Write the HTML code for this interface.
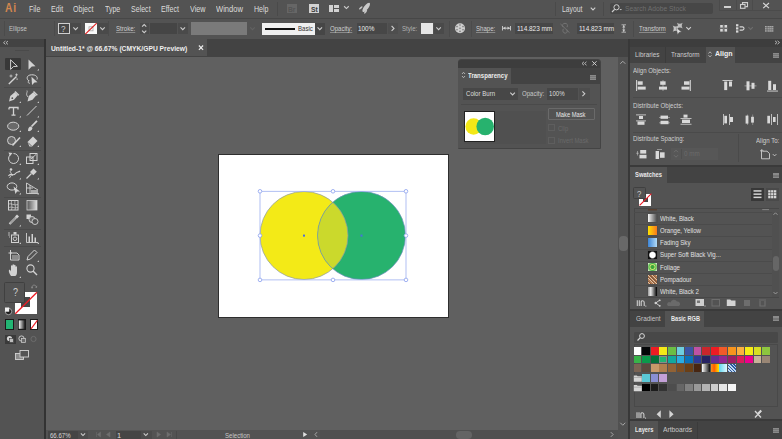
<!DOCTYPE html>
<html><head><meta charset="utf-8">
<style>
*{box-sizing:border-box;margin:0;padding:0}
html,body{width:782px;height:439px;overflow:hidden;background:#535353;font-family:"Liberation Sans",sans-serif;color:#d6d6d6}
.a{position:absolute}
.t{position:absolute;white-space:nowrap;transform-origin:0 0;line-height:1}
</style></head><body>
<div class="a" style="left:0px;top:0px;width:782px;height:18px;background:#535353;"></div>
<div class="a" style="left:0px;top:17.5px;width:782px;height:1px;background:#474747;"></div>
<div class="t" style="left:5px;top:1.4px;font-size:13.2px;color:#d4874f;font-weight:700;transform:scaleX(0.78);letter-spacing:.9px">Ai</div>
<div class="t" style="left:28.8px;top:4.6px;font-size:8.3px;color:#dcdcdc;font-weight:400;transform:scaleX(0.85);">File</div>
<div class="t" style="left:50.8px;top:4.6px;font-size:8.3px;color:#dcdcdc;font-weight:400;transform:scaleX(0.85);">Edit</div>
<div class="t" style="left:72.9px;top:4.6px;font-size:8.3px;color:#dcdcdc;font-weight:400;transform:scaleX(0.85);">Object</div>
<div class="t" style="left:105px;top:4.6px;font-size:8.3px;color:#dcdcdc;font-weight:400;transform:scaleX(0.85);">Type</div>
<div class="t" style="left:131px;top:4.6px;font-size:8.3px;color:#dcdcdc;font-weight:400;transform:scaleX(0.85);">Select</div>
<div class="t" style="left:161px;top:4.6px;font-size:8.3px;color:#dcdcdc;font-weight:400;transform:scaleX(0.85);">Effect</div>
<div class="t" style="left:189.8px;top:4.6px;font-size:8.3px;color:#dcdcdc;font-weight:400;transform:scaleX(0.87);">View</div>
<div class="t" style="left:215.8px;top:4.6px;font-size:8.3px;color:#dcdcdc;font-weight:400;transform:scaleX(0.91);">Window</div>
<div class="t" style="left:253.8px;top:4.6px;font-size:8.3px;color:#dcdcdc;font-weight:400;transform:scaleX(0.85);">Help</div>
<div class="a" style="left:276.5px;top:2px;width:1px;height:14px;background:#4a4a4a;"></div>
<div class="a" style="left:286.6px;top:3.8px;width:10.3px;height:9.6px;background:#666666;"></div>
<div class="t" style="left:288.3px;top:5.5px;font-size:7.5px;color:#545454;font-weight:700;transform:scaleX(0.9);">Br</div>
<div class="a" style="left:309px;top:3.8px;width:9.8px;height:9.6px;background:#d2d2d2;"></div>
<div class="t" style="left:310.5px;top:5.5px;font-size:7.5px;color:#3a3a3a;font-weight:700;transform:scaleX(0.9);">St</div>
<div class="a" style="left:328.5px;top:4.8px;width:4.6px;height:7px;background:#d2d2d2;"></div>
<div class="a" style="left:333.8px;top:4.8px;width:5.2px;height:3px;background:#d2d2d2;"></div>
<div class="a" style="left:333.8px;top:8.7px;width:5.2px;height:3.1px;background:#d2d2d2;"></div>
<div class="a" style="left:554.5px;top:2px;width:1px;height:14px;background:#4a4a4a;"></div>
<div class="t" style="left:562.4px;top:4.8px;font-size:8.3px;color:#d8d8d8;font-weight:400;transform:scaleX(0.82);">Layout</div>
<div class="a" style="left:603px;top:2px;width:1px;height:14px;background:#4a4a4a;"></div>
<div class="a" style="left:610px;top:3px;width:102.6px;height:11px;background:#474747;border-radius:2px"></div>
<div class="t" style="left:624.6px;top:4.8px;font-size:8px;color:#6f6f6f;font-weight:400;transform:scaleX(0.84);">Search Adobe Stock</div>
<div class="a" style="left:718.7px;top:0px;width:1px;height:10.5px;background:#4b4b4b;"></div>
<div class="a" style="left:718.7px;top:10px;width:63.3px;height:1px;background:#4b4b4b;"></div>
<div class="a" style="left:735.5px;top:0px;width:1px;height:10.5px;background:#4b4b4b;"></div>
<div class="a" style="left:752.4px;top:0px;width:1px;height:10.5px;background:#4b4b4b;"></div>
<div class="a" style="left:723.5px;top:6px;width:7px;height:1.8px;background:#d0d0d0;"></div>
<div class="a" style="left:0px;top:18.5px;width:782px;height:20px;background:#535353;"></div>
<div class="a" style="left:4px;top:21px;width:1px;height:15px;background:#4b4b4b;"></div>
<div class="t" style="left:9px;top:25px;font-size:7.6px;color:#c4c4c4;font-weight:400;transform:scaleX(0.8);">Ellipse</div>
<div class="a" style="left:53.5px;top:21px;width:1px;height:15px;background:#4b4b4b;"></div>
<div class="a" style="left:57.9px;top:22.8px;width:12.2px;height:11.7px;background:#474747;border:1.4px solid #cfcfcf"></div>
<div class="t" style="left:61.2px;top:24.8px;font-size:9px;color:#cfcfcf;font-weight:400;transform:scaleX(0.9);">?</div>
<div class="a" style="left:70.1px;top:22.8px;width:11px;height:11.7px;background:#4a4a4a;"></div>
<div class="a" style="left:84.9px;top:22.8px;width:12.1px;height:11.7px;background:#fafafa;"></div>
<div class="a" style="left:97px;top:22.8px;width:11px;height:11.7px;background:#4a4a4a;"></div>
<div class="a" style="left:107.5px;top:21px;width:1px;height:15px;background:#4b4b4b;"></div>
<div class="t" style="left:115.6px;top:25.2px;font-size:7.6px;color:#d0d0d0;font-weight:400;transform:scaleX(0.8);text-decoration:underline;text-decoration-color:#8a8a8a">Stroke:</div>
<div class="a" style="left:139.5px;top:22.8px;width:9.5px;height:11.5px;background:#4a4a4a;"></div>
<div class="a" style="left:149.9px;top:22.8px;width:27.4px;height:11.5px;background:#454545;"></div>
<div class="a" style="left:177.5px;top:22.8px;width:10.4px;height:11.5px;background:#4a4a4a;"></div>
<div class="a" style="left:191.3px;top:22.3px;width:55.4px;height:12.7px;background:#7a7a7a;"></div>
<div class="a" style="left:261.7px;top:22.8px;width:52.9px;height:11.9px;background:#f0f0f0;"></div>
<div class="a" style="left:264.8px;top:27.6px;width:30.2px;height:2px;background:#111111;"></div>
<div class="t" style="left:298px;top:25.2px;font-size:7.6px;color:#303030;font-weight:400;transform:scaleX(0.8);">Basic</div>
<div class="a" style="left:314.6px;top:22.8px;width:10.4px;height:11.9px;background:#464646;"></div>
<div class="t" style="left:330px;top:25.2px;font-size:7.6px;color:#d0d0d0;font-weight:400;transform:scaleX(0.8);text-decoration:underline;text-decoration-color:#8a8a8a">Opacity:</div>
<div class="a" style="left:356.6px;top:22.6px;width:30.4px;height:11.5px;background:#474747;"></div>
<div class="t" style="left:358.3px;top:25px;font-size:7.6px;color:#ececec;font-weight:400;transform:scaleX(0.84);">100%</div>
<div class="a" style="left:388px;top:22.6px;width:10px;height:11.5px;background:#4e4e4e;"></div>
<div class="t" style="left:401.5px;top:25.2px;font-size:7.6px;color:#b0b0b0;font-weight:400;transform:scaleX(0.8);">Style:</div>
<div class="a" style="left:420.5px;top:22.8px;width:12.1px;height:11.7px;background:#e6e6e6;"></div>
<div class="a" style="left:433.5px;top:22.8px;width:10.5px;height:11.7px;background:#4a4a4a;"></div>
<div class="a" style="left:448.7px;top:20.5px;width:1px;height:16px;background:#4b4b4b;"></div>
<div class="a" style="left:471.2px;top:20.5px;width:1px;height:16px;background:#4b4b4b;"></div>
<div class="t" style="left:475.8px;top:25.2px;font-size:7.6px;color:#d0d0d0;font-weight:400;transform:scaleX(0.8);text-decoration:underline;text-decoration-color:#8a8a8a">Shape:</div>
<div class="a" style="left:515.2px;top:22.5px;width:38px;height:11.8px;background:#474747;"></div>
<div class="t" style="left:517px;top:25.2px;font-size:7.6px;color:#ececec;font-weight:400;transform:scaleX(0.845);">114.823 mm</div>
<div class="a" style="left:577px;top:22.5px;width:37.2px;height:11.8px;background:#474747;"></div>
<div class="t" style="left:578.6px;top:25.2px;font-size:7.6px;color:#ececec;font-weight:400;transform:scaleX(0.845);">114.823 mm</div>
<div class="a" style="left:633px;top:20.5px;width:1px;height:16px;background:#4b4b4b;"></div>
<div class="t" style="left:638.5px;top:25.2px;font-size:7.6px;color:#d0d0d0;font-weight:400;transform:scaleX(0.78);text-decoration:underline;text-decoration-color:#8a8a8a">Transform</div>
<svg class="a" style="left:0;top:0" width="782" height="439" viewBox="0 0 782 439"><path d="M344.09999999999997 6.25 L346.4 8.55 L348.7 6.25" fill="none" stroke="#cdcdcd" stroke-width="1.1"/>
<ellipse cx="366.2" cy="7.4" rx="5.6" ry="2.1" transform="rotate(-52 366.2 7.4)" fill="#cacaca"/><ellipse cx="360.8" cy="7.9" rx="2.2" ry="0.9" transform="rotate(-40 360.8 7.9)" fill="#c4c4c4"/><ellipse cx="365.6" cy="11.8" rx="2.3" ry="0.9" transform="rotate(-55 365.6 11.8)" fill="#c4c4c4"/>
<path d="M590.75 7.675000000000001 L593 9.925 L595.25 7.675000000000001" fill="none" stroke="#cdcdcd" stroke-width="1.1"/>
<circle cx="616.5" cy="7.3" r="2.6" fill="none" stroke="#cfcfcf" stroke-width="1"/><path d="M614.6 9.3 L612 12" stroke="#cfcfcf" stroke-width="1.2"/><path d="M619.5 9 L622 9 L620.75 10.3Z" fill="#cfcfcf"/>
<rect x="740.5" y="4.5" width="4.5" height="3.8" fill="none" stroke="#d0d0d0" stroke-width="1.1"/><path d="M742.5 4.2 V2.6 H747.5 V6.6 H745.3" fill="none" stroke="#d0d0d0" stroke-width="1.1"/>
<path d="M763.2 3 L769 8.2 M769 3 L763.2 8.2" stroke="#d8d8d8" stroke-width="1.1"/>
<path d="M73.35 27.475 L75.6 29.725 L77.85 27.475" fill="none" stroke="#cdcdcd" stroke-width="1.1"/>
<rect x="89" y="26.8" width="4" height="4" fill="none" stroke="#a8a8a8" stroke-width=".8"/><path d="M85.3 34.2 L96.7 23.1" stroke="#e01a1a" stroke-width="1.1"/>
<path d="M100.25 27.475 L102.5 29.725 L104.75 27.475" fill="none" stroke="#cdcdcd" stroke-width="1.1"/>
<path d="M142.1 26.650000000000002 L144.2 24.55 L146.29999999999998 26.650000000000002" fill="none" stroke="#cdcdcd" stroke-width="1.1"/>
<path d="M142.1 30.55 L144.2 32.65 L146.29999999999998 30.55" fill="none" stroke="#cdcdcd" stroke-width="1.1"/>
<path d="M180.55 27.475 L182.8 29.725 L185.05 27.475" fill="none" stroke="#cdcdcd" stroke-width="1.1"/>
<path d="M250.25 27.475 L252.5 29.725 L254.75 27.475" fill="none" stroke="#626262" stroke-width="1.1"/>
<path d="M317.55 27.475 L319.8 29.725 L322.05 27.475" fill="none" stroke="#cdcdcd" stroke-width="1.1"/>
<path d="M391.6 26.0 L394.0 28.4 L391.6 30.799999999999997" fill="none" stroke="#cdcdcd" stroke-width="1.1"/>
<path d="M436.35 27.475 L438.6 29.725 L440.85 27.475" fill="none" stroke="#cdcdcd" stroke-width="1.1"/>
<circle cx="460" cy="28.2" r="5" fill="#cfcfcf"/><g fill="#7a7a7a"><circle cx="460" cy="28.2" r=".8"/><circle cx="460" cy="25" r=".8"/><circle cx="460" cy="31.4" r=".8"/><circle cx="457" cy="26.6" r=".8"/><circle cx="463" cy="26.6" r=".8"/><circle cx="457" cy="29.8" r=".8"/><circle cx="463" cy="29.8" r=".8"/></g>
<path d="M502.5 26 V30.5 M510.5 26 V30.5 M503 28.2 H510" stroke="#cfcfcf" stroke-width=".9"/><path d="M503 28.2 L505.5 26.6 V29.8Z M510 28.2 L507.5 26.6 V29.8Z" fill="#cfcfcf"/>
<path d="M563 27 C561.8 25 563 23.3 565 23.3 C567 23.3 568.2 25 567 27.2 M563.3 28.8 C562.3 30.8 563.2 33.2 565.2 33.2 C567 33.2 567.8 31.5 566.8 29.5 M560.5 24 L569.5 32.7" fill="none" stroke="#747474" stroke-width="1"/>
<path d="M621.5 24.8 H626 M621.5 32.2 H626 M623.75 25 V32" stroke="#c8c8c8" stroke-width=".8"/><path d="M623.75 25.3 L622.2 27.5 H625.3Z M623.75 31.7 L622.2 29.5 H625.3Z" fill="#c8c8c8"/>
<path d="M676.9 22.700000000000003 Q679.8 24.585 682.6999999999999 22.700000000000003 Q680.8149999999999 25.6 682.6999999999999 28.5 Q679.8 26.615000000000002 676.9 28.5 Q678.785 25.6 676.9 22.700000000000003Z" fill="#bdbdbd"/><path d="M672.6999999999999 25.5 Q675.8 27.515 678.9 25.5 Q676.885 28.6 678.9 31.700000000000003 Q675.8 29.685000000000002 672.6999999999999 31.700000000000003 Q674.7149999999999 28.6 672.6999999999999 25.5Z" fill="#c4c4c4"/><path d="M676.2 27.8 L681.6 32 L679.2 32.3 L677.6 34.6Z" fill="#e0e0e0" stroke="#535353" stroke-width=".4"/>
<path d="M686.3000000000001 27.05 L688.6 29.349999999999998 L690.9 27.05" fill="none" stroke="#cdcdcd" stroke-width="1.1"/>
<path d="M723.6 24.5 V32 M719.5 28.2 H728" stroke="#8a8a8a" stroke-width=".6"/><g fill="#d8d8d8"><rect x="720.2" y="25" width="2.6" height="2.6"/><rect x="724.5" y="25" width="2.6" height="2.6"/><rect x="720.2" y="29" width="2.6" height="2.6"/><rect x="724.5" y="29" width="2.6" height="2.6"/></g>
<g fill="#d8d8d8"><rect x="736" y="24.2" width="2.4" height="2.2"/><rect x="736" y="27.3" width="2.4" height="2.2"/><rect x="736" y="30.4" width="2.4" height="2.2"/></g><path d="M739.6 26.9 H742.4 A1.6 1.6 0 0 1 742.4 30.1 H739.6" fill="none" stroke="#d8d8d8" stroke-width="1.1"/>
<path d="M748.4 27.2 L750.6 29.400000000000002 L752.8000000000001 27.2" fill="none" stroke="#6e6e6e" stroke-width="1.1"/>
<g fill="#a8a8a8"><rect x="765" y="26" width="1.7" height="1.5"/><rect x="765" y="28.1" width="1.7" height="1.5"/><rect x="765" y="30.2" width="1.7" height="1.5"/><rect x="767.4" y="26" width="6" height="1.5"/><rect x="767.4" y="28.1" width="6" height="1.5"/><rect x="767.4" y="30.2" width="6" height="1.5"/></g><path d="M769.4 26 V31.7 M771.4 26 V31.7" stroke="#6a6a6a" stroke-width=".4"/></svg>
<div class="a" style="left:0px;top:38.5px;width:44px;height:8.5px;background:#434343;"></div>
<div class="a" style="left:44px;top:38.5px;width:2px;height:401px;background:#333333;"></div>
<div class="a" style="left:14.5px;top:49.8px;width:14px;height:1px;background:#4a4a4a;"></div>
<div class="a" style="left:46px;top:38.5px;width:582px;height:18.5px;background:#434343;"></div>
<div class="a" style="left:45.8px;top:39.4px;width:161.3px;height:17px;background:#535353;"></div>
<div class="t" style="left:51.4px;top:45.6px;font-size:7.1px;color:#f0f0f0;font-weight:700;transform:scaleX(0.945);">Untitled-1* @ 66.67% (CMYK/GPU Preview)</div>
<div class="a" style="left:46px;top:57px;width:572px;height:373px;background:#606060;"></div>
<div class="a" style="left:618px;top:57px;width:10px;height:382px;background:#515151;"></div>
<div class="a" style="left:619px;top:236px;width:8.5px;height:15px;background:#686868;border-radius:4px"></div>
<div class="a" style="left:628px;top:38.5px;width:2px;height:401px;background:#383838;"></div>
<div class="a" style="left:46px;top:430px;width:572px;height:9px;background:#535353;"></div>
<div class="a" style="left:48px;top:430.5px;width:30px;height:8.5px;background:#454545;"></div>
<div class="t" style="left:50px;top:431.5px;font-size:7.4px;color:#d8d8d8;font-weight:400;transform:scaleX(0.82);">66.67%</div>
<div class="a" style="left:78px;top:430.5px;width:10px;height:8.5px;background:#4c4c4c;"></div>
<div class="a" style="left:115.5px;top:430.5px;width:25px;height:8.5px;background:#454545;"></div>
<div class="t" style="left:117px;top:431.5px;font-size:7.4px;color:#d8d8d8;font-weight:400;">1</div>
<div class="a" style="left:140.5px;top:430.5px;width:11px;height:8.5px;background:#4c4c4c;"></div>
<div class="a" style="left:176px;top:430.5px;width:1px;height:8.5px;background:#4a4a4a;"></div>
<div class="t" style="left:225px;top:431.8px;font-size:7.4px;color:#c8c8c8;font-weight:400;transform:scaleX(0.82);">Selection</div>
<div class="a" style="left:320px;top:430px;width:298px;height:9px;background:#505050;"></div>
<div class="a" style="left:456px;top:430.5px;width:16px;height:8px;background:#646464;border-radius:4px"></div>
<div class="a" style="left:218px;top:154px;width:230.5px;height:163.5px;background:#ffffff;border:1px solid #2e2e2e"></div>
<div class="a" style="left:4.6px;top:57.5px;width:16.8px;height:12.7px;background:#383838;border-radius:1px"></div>
<div class="a" style="left:4px;top:87px;width:37px;height:0.8px;background:#4a4a4a;"></div>
<div class="a" style="left:4px;top:149.5px;width:37px;height:0.8px;background:#4a4a4a;"></div>
<div class="a" style="left:4px;top:196.5px;width:37px;height:0.8px;background:#4a4a4a;"></div>
<div class="a" style="left:4px;top:228.5px;width:37px;height:0.8px;background:#4a4a4a;"></div>
<div class="a" style="left:4px;top:245.8px;width:37px;height:0.8px;background:#4a4a4a;"></div>
<div class="a" style="left:15px;top:292px;width:22.2px;height:22px;background:#ffffff;"></div>
<div class="a" style="left:21px;top:297px;width:9.2px;height:10.3px;background:#474747;"></div>
<div class="a" style="left:4.2px;top:281.5px;width:21.3px;height:21.5px;background:#535353;border:1.1px solid #404040;border-radius:1.5px"></div>
<div class="t" style="left:12.6px;top:288px;font-size:10px;color:#d0d0d0;font-weight:400;transform:scaleX(0.9);">?</div>
<div class="a" style="left:5px;top:319.4px;width:8.8px;height:10.4px;background:#1a1a1a;"></div>
<div class="a" style="left:6px;top:320.4px;width:6.8px;height:8.4px;background:#22b573;"></div>
<div class="a" style="left:17.8px;top:319.4px;width:8px;height:10.4px;background:#1a1a1a;"></div>
<div class="a" style="left:30px;top:319.4px;width:8.4px;height:10.4px;background:#1a1a1a;"></div>
<div class="a" style="left:31px;top:320.4px;width:6.4px;height:8.4px;background:#ffffff;"></div>
<div class="a" style="left:5px;top:334.5px;width:10.5px;height:9.5px;background:#3a3a3a;"></div>
<svg class="a" style="left:0;top:0" width="782" height="439" viewBox="0 0 782 439"><path d="M5.5 41 L3.5 42.7 L5.5 44.4 M8 41 L6 42.7 L8 44.4" fill="none" stroke="#bdbdbd" stroke-width=".9"/>
<path d="M198.9 45.5 L203.1 49.9 M203.1 45.5 L198.9 49.9" stroke="#ececec" stroke-width="1.15"/>
<path d="M620.3 63.75 L622.8 61.25 L625.3 63.75" fill="none" stroke="#a8a8a8" stroke-width="1"/>
<path d="M620.3 422.75 L622.8 425.25 L625.3 422.75" fill="none" stroke="#a8a8a8" stroke-width="1"/>
<path d="M80.9 433.45 L83 435.55 L85.1 433.45" fill="none" stroke="#cdcdcd" stroke-width="1.1"/>
<path d="M96.5 432 V437 M100.5 432 L97.5 434.5 L100.5 437 Z M110 432 L106.5 434.5 L110 437Z" fill="#6e6e6e" stroke="#6e6e6e" stroke-width=".5"/>
<path d="M143.70000000000002 433.45 L145.8 435.55 L147.9 433.45" fill="none" stroke="#cdcdcd" stroke-width="1.1"/>
<path d="M157 432 L160.5 434.5 L157 437 Z M167 432 L170.5 434.5 L167 437Z M171.5 432 V437" fill="#6e6e6e" stroke="#6e6e6e" stroke-width=".5"/>
<path d="M303.2 432 L307.2 434.5 L303.2 437Z" fill="#e0e0e0"/>
<path d="M317 432.2 L315 434.5 L317 436.8" fill="none" stroke="#a8a8a8" stroke-width="1"/>
<path d="M610.85 432.2 L613.15 434.5 L610.85 436.8" fill="none" stroke="#a8a8a8" stroke-width="1"/>
<defs><clipPath id="cy"><circle cx="304" cy="235.5" r="44"/></clipPath></defs>
<circle cx="304" cy="235.5" r="44" fill="#f3ea17"/>
<circle cx="361.5" cy="235.5" r="44" fill="#27b26e"/>
<circle cx="361.5" cy="235.5" r="44" fill="#cbd92c" clip-path="url(#cy)"/>
<circle cx="304" cy="235.5" r="44" fill="none" stroke="#8c9aa8" stroke-width=".7"/>
<circle cx="361.5" cy="235.5" r="44" fill="none" stroke="#6f8fc0" stroke-width=".7"/>
<rect x="260" y="191.3" width="146" height="88.6" fill="none" stroke="#9db0f0" stroke-width=".8"/>
<g fill="#ffffff" stroke="#8aa0ee" stroke-width=".8">
<circle cx="260" cy="191.3" r="1.8"/><circle cx="333" cy="191.3" r="1.8"/><circle cx="406" cy="191.3" r="1.8"/><circle cx="260" cy="235.6" r="1.8"/><circle cx="406" cy="235.6" r="1.8"/><circle cx="260" cy="279.9" r="1.8"/><circle cx="333" cy="279.9" r="1.8"/><circle cx="406" cy="279.9" r="1.8"/>
</g>
<rect x="303" y="234.6" width="2" height="2" fill="#4a6ee0"/><rect x="360.5" y="234.6" width="2" height="2" fill="#4a6ee0"/>

<path d="M10.6 59.8 L17.4 66.3 L13.6 66.5 L10.6 69.4Z" fill="none" stroke="#d2d2d2" stroke-width="1"/>
<path d="M28.5 59.5 L35.5 66.3 L31.8 66.6 L28.5 69.8Z" fill="#d2d2d2"/>
<path d="M39 70.5 L37.2 70.5 L39 68.7Z" fill="#c8c8c8"/>
<path d="M8.8 84 L16.5 76.5" stroke="#d2d2d2" stroke-width="1.4"/><path d="M11 74.5 L11 77.5 M9.5 76 L12.5 76 M16.5 73.5 V76 M15.2 74.8 H17.8" stroke="#d2d2d2" stroke-width=".8"/><rect x="16.5" y="78.5" width="1.2" height="1.2" fill="#d2d2d2"/>
<path d="M29 81 C26 79 26.5 75 31.5 74.8 C36 74.6 38 77 37 79.5" fill="none" stroke="#d2d2d2" stroke-width="1"/><path d="M29 80.5 C27.5 82 28.5 84 30 83" fill="none" stroke="#d2d2d2" stroke-width=".9"/><path d="M31.5 76.8 L37.5 82.3 L34.5 82.4 L32 85Z" fill="#d2d2d2"/>
<path d="M9 101.5 L10.3 96 L14.8 92.3 L17.8 95.3 L14 99.8 Z" fill="#d2d2d2"/><path d="M15 91.5 L18.8 95.2" stroke="#d2d2d2" stroke-width="1.4"/><circle cx="12.3" cy="98.2" r=".9" fill="#535353"/>
<path d="M21 103 L19.2 103 L21 101.2Z" fill="#c8c8c8"/>
<path d="M27.5 101.5 L28.8 96 L33.3 92.3 L36.3 95.3 L32.5 99.8 Z" fill="#d2d2d2"/><path d="M33.5 91.5 L37.3 95.2" stroke="#d2d2d2" stroke-width="1.4"/><path d="M28 97 C25 94 28 92 27 90.5" fill="none" stroke="#d2d2d2" stroke-width=".8"/>
<path d="M39 103 L37.2 103 L39 101.2Z" fill="#c8c8c8"/>
<path d="M9 107.5 H18 V109.5 M9 107.5 V109.5 M13.5 107.5 V115.2 M11.5 115.2 H15.5" fill="none" stroke="#d2d2d2" stroke-width="1.3"/>
<path d="M21 117.5 L19.2 117.5 L21 115.7Z" fill="#c8c8c8"/>
<path d="M27 115.5 L36.5 106" stroke="#d2d2d2" stroke-width="1"/>
<path d="M39 117.5 L37.2 117.5 L39 115.7Z" fill="#c8c8c8"/>
<ellipse cx="13.2" cy="126.2" rx="5.6" ry="4" fill="#6a6a6a" stroke="#d2d2d2" stroke-width="1"/>
<path d="M21 132 L19.2 132 L21 130.2Z" fill="#c8c8c8"/>
<path d="M28 131 C28 128 29 126.5 31 126.5 L32.5 128 C32 130.5 30 131.5 28 131Z" fill="#d2d2d2"/><path d="M31.5 126.5 L37 120.8" stroke="#d2d2d2" stroke-width="1.8"/>
<path d="M39 132 L37.2 132 L39 130.2Z" fill="#c8c8c8"/>
<circle cx="11.5" cy="140.5" r="4" fill="#6a6a6a" stroke="#d2d2d2" stroke-width="1"/><path d="M12.5 145.5 L20 137.5" stroke="#d2d2d2" stroke-width="1.6"/>
<path d="M21 147 L19.2 147 L21 145.2Z" fill="#c8c8c8"/>
<path d="M27.5 142 L33 136.5 L37.5 141 L32 146.5 H29.5 Z" fill="#d2d2d2"/><path d="M28 142.5 L31.5 146" stroke="#535353" stroke-width=".8"/>
<path d="M39 147 L37.2 147 L39 145.2Z" fill="#c8c8c8"/>
<path d="M10 155 A5 5 0 1 0 13.5 153.5" fill="none" stroke="#d2d2d2" stroke-width="1"/><path d="M8.5 152.5 L12.5 153 L10 156Z" fill="#d2d2d2"/>
<path d="M21 165 L19.2 165 L21 163.2Z" fill="#c8c8c8"/>
<rect x="26.5" y="157" width="6.5" height="6.5" fill="none" stroke="#d2d2d2" stroke-width="1"/><rect x="30" y="153.5" width="7" height="7" fill="none" stroke="#d2d2d2" stroke-width="1"/><path d="M31 159 L36 154.5" stroke="#d2d2d2" stroke-width=".9"/>
<path d="M39 165 L37.2 165 L39 163.2Z" fill="#c8c8c8"/>
<path d="M8.5 176 C11 172 13 177 15.5 173.5 C17 171.5 18.5 172.5 20 171" fill="none" stroke="#d2d2d2" stroke-width="1.2"/><circle cx="11" cy="169.5" r="1.3" fill="#d2d2d2"/><path d="M10 171 L12.5 176 M9.5 178 L12 174" stroke="#d2d2d2" stroke-width=".8"/>
<path d="M21 179.5 L19.2 179.5 L21 177.7Z" fill="#c8c8c8"/>
<path d="M30 172 L33.5 168.5 L36.8 171.8 L33.3 175.3Z" fill="#d2d2d2"/><path d="M26.5 178.5 L31.5 173.5" stroke="#d2d2d2" stroke-width="1.2"/>
<path d="M39 179.5 L37.2 179.5 L39 177.7Z" fill="#c8c8c8"/>
<ellipse cx="12" cy="186.5" rx="4.8" ry="3.6" fill="none" stroke="#d2d2d2" stroke-width="1"/><path d="M13.5 186.5 L20 191.5 L17 191.5 L15.5 194Z" fill="#d2d2d2"/>
<path d="M21 194.5 L19.2 194.5 L21 192.7Z" fill="#c8c8c8"/>
<path d="M26.5 183 V193.5 H38 M26.5 183 L38 190 M26.5 188 H33 M30 185 V193.5" fill="none" stroke="#d2d2d2" stroke-width=".9"/><path d="M31 190 L38 190 L38 193 L31 193Z" fill="#a8a8a8"/>
<path d="M39 194.5 L37.2 194.5 L39 192.7Z" fill="#c8c8c8"/>
<rect x="8.5" y="200.5" width="9.5" height="9.5" fill="none" stroke="#d2d2d2" stroke-width="1"/><path d="M8.5 204 C12 203 14 206 18 204.5 M8.5 207.5 C12 206 14 209 18 207.5 M11.5 200.5 C10.5 204 13 206 11.5 210 M15 200.5 C14 204 16.5 206 15 210" fill="none" stroke="#d2d2d2" stroke-width=".7"/>
<defs><linearGradient id="tg" x1="0" x2="1"><stop offset="0" stop-color="#555"/><stop offset="1" stop-color="#e0e0e0"/></linearGradient></defs><rect x="27" y="200.5" width="10" height="9.5" fill="url(#tg)" stroke="#d2d2d2" stroke-width=".8"/>
<path d="M9.5 224 L16 217.5" stroke="#d2d2d2" stroke-width="2.2"/><path d="M10.3 223.2 L15.5 218" stroke="#535353" stroke-width=".8"/><path d="M15 216.5 L17 214.5 L19 216.5 L17 218.5Z" fill="#d2d2d2"/>
<path d="M21 226.5 L19.2 226.5 L21 224.7Z" fill="#c8c8c8"/>
<rect x="26.5" y="214.5" width="4.5" height="4.5" fill="#d2d2d2"/><circle cx="32" cy="219.5" r="3" fill="#6a6a6a" stroke="#d2d2d2" stroke-width=".9"/><circle cx="35" cy="221.5" r="3" fill="#535353" stroke="#d2d2d2" stroke-width=".9"/>
<rect x="11.5" y="235" width="7" height="7.5" fill="none" stroke="#d2d2d2" stroke-width="1"/><circle cx="15" cy="238.8" r="1.8" fill="none" stroke="#d2d2d2" stroke-width=".9"/><rect x="13.5" y="232" width="3" height="2.5" fill="#d2d2d2"/><path d="M8 233 H10 M8 235 H10 M9 237 H10" stroke="#d2d2d2" stroke-width=".8"/>
<path d="M21 244 L19.2 244 L21 242.2Z" fill="#c8c8c8"/>
<path d="M26.5 233 V242.5 H38" fill="none" stroke="#d2d2d2" stroke-width=".9"/><rect x="28.5" y="236.5" width="1.5" height="6" fill="#d2d2d2"/><rect x="31.5" y="234" width="1.5" height="8.5" fill="#d2d2d2"/><rect x="34.5" y="237.5" width="1.5" height="5" fill="#d2d2d2"/>
<path d="M39 244 L37.2 244 L39 242.2Z" fill="#c8c8c8"/>
<path d="M10.5 250 V260 H19 V255 L17 253 H10.5 M8.5 253 H12" fill="none" stroke="#d2d2d2" stroke-width="1"/><rect x="12" y="255" width="6" height="4" fill="#8a8a8a"/>
<path d="M27 260 L28 256.5 L34.5 250 L37 252.5 L30.5 259 Z" fill="none" stroke="#d2d2d2" stroke-width="1"/>
<path d="M39 262 L37.2 262 L39 260.2Z" fill="#c8c8c8"/>
<path d="M11 276 C9 273 8.5 271 9 270 C9.5 269.5 10.5 270 11 271.5 V266 C11 265 12.5 265 12.5 266 V269.5 V265 C12.5 264 14 264 14 265 V269.5 V265.5 C14 264.5 15.5 264.5 15.5 265.5 V270 V267 C15.5 266 17 266 17 267 V272 C17 274.5 16 276 15 276Z" fill="#d2d2d2"/>
<path d="M21 278 L19.2 278 L21 276.2Z" fill="#c8c8c8"/>
<circle cx="30.5" cy="268.5" r="3.6" fill="none" stroke="#d2d2d2" stroke-width="1.1"/><path d="M33 271 L37 275" stroke="#d2d2d2" stroke-width="1.5"/>
<path d="M15.3 313.7 L37 292.3" stroke="#ee1c24" stroke-width="1.3"/>
<path d="M32 288 C32 285 34 284 36.5 286.5" fill="none" stroke="#8a8a8a" stroke-width=".9"/><path d="M31 286.8 L32 289 L33.2 287Z M37.2 285.5 L37 288 L35 287.2Z" fill="#8a8a8a"/>
<circle cx="8.5" cy="311.5" r="3.2" fill="#1e1e1e" stroke="#d0d0d0" stroke-width=".7"/><rect x="5" y="307.5" width="4.2" height="4.2" fill="#f0f0f0"/>
<defs><linearGradient id="tg2" x1="0" x2="1"><stop offset="0" stop-color="#fafafa"/><stop offset="1" stop-color="#222"/></linearGradient></defs><rect x="18.8" y="320.4" width="6" height="8.4" fill="url(#tg2)"/>
<path d="M31 328.8 L37.4 320.4" stroke="#ee1c24" stroke-width="1.1"/>
<circle cx="9.5" cy="338.5" r="2.6" fill="#d2d2d2"/><rect x="9.5" y="338.5" width="4" height="4" fill="#bdbdbd" stroke="#3a3a3a" stroke-width=".6"/>
<circle cx="21.5" cy="338.5" r="2.6" fill="none" stroke="#d2d2d2" stroke-width=".9"/><rect x="21.5" y="338.5" width="4" height="4" fill="#6a6a6a" stroke="#d2d2d2" stroke-width=".7"/>
<circle cx="33.5" cy="339" r="2.6" fill="none" stroke="#6e6e6e" stroke-width=".9"/>
<rect x="15.5" y="353.5" width="8" height="6" fill="#8a8a8a" stroke="#d2d2d2" stroke-width=".9"/><rect x="20" y="350.5" width="8.5" height="6.5" fill="#535353" stroke="#d2d2d2" stroke-width=".9"/></svg>
<div class="a" style="left:630px;top:38.5px;width:152px;height:401px;background:#535353;"></div>
<div class="a" style="left:630px;top:38.5px;width:152px;height:8px;background:#3d3d3d;"></div>
<div class="a" style="left:630px;top:46.5px;width:152px;height:16px;background:#434343;"></div>
<div class="a" style="left:665px;top:47px;width:0.8px;height:15.5px;background:#3b3b3b;"></div>
<div class="a" style="left:705.5px;top:47px;width:0.8px;height:15.5px;background:#3b3b3b;"></div>
<div class="a" style="left:706px;top:46.5px;width:29px;height:16px;background:#535353;"></div>
<div class="t" style="left:635.3px;top:50.6px;font-size:7.3px;color:#cccccc;font-weight:400;transform:scaleX(0.875);">Libraries</div>
<div class="t" style="left:670.8px;top:50.6px;font-size:7.3px;color:#cccccc;font-weight:400;transform:scaleX(0.865);">Transform</div>
<div class="t" style="left:714.7px;top:50.4px;font-size:7.6px;color:#f0f0f0;font-weight:700;transform:scaleX(0.92);">Align</div>
<div class="a" style="left:772.8px;top:52.6px;width:6.3px;height:5px;background:#8a8a8a;"></div>
<div class="a" style="left:772.8px;top:54.1px;width:6.3px;height:0.6px;background:#767676;"></div>
<div class="a" style="left:772.8px;top:55.7px;width:6.3px;height:0.6px;background:#767676;"></div>
<div class="t" style="left:633px;top:67.4px;font-size:7.2px;color:#d0d0d0;font-weight:400;transform:scaleX(0.85);">Align Objects:</div>
<div class="a" style="left:633px;top:97px;width:149px;height:0.8px;background:#4a4a4a;"></div>
<div class="t" style="left:633px;top:102.2px;font-size:7.2px;color:#d0d0d0;font-weight:400;transform:scaleX(0.85);">Distribute Objects:</div>
<div class="a" style="left:633px;top:131.6px;width:149px;height:0.8px;background:#4a4a4a;"></div>
<div class="t" style="left:633px;top:135.4px;font-size:7.2px;color:#d0d0d0;font-weight:400;transform:scaleX(0.85);">Distribute Spacing:</div>
<div class="a" style="left:738px;top:134px;width:0.8px;height:28px;background:#4a4a4a;"></div>
<div class="t" style="left:756px;top:136.6px;font-size:7.2px;color:#d0d0d0;font-weight:400;transform:scaleX(0.85);">Align To:</div>
<div class="a" style="left:671px;top:147.8px;width:47px;height:11.8px;background:#575757;"></div>
<div class="a" style="left:681px;top:148.5px;width:0.8px;height:10.5px;background:#4f4f4f;"></div>
<div class="t" style="left:684px;top:150px;font-size:7.4px;color:#6c6c6c;font-weight:400;transform:scaleX(0.85);">0 mm</div>
<div class="a" style="left:630px;top:164.9px;width:152px;height:2.2px;background:#3a3a3a;"></div>
<div class="a" style="left:630px;top:167.2px;width:152px;height:16.3px;background:#434343;"></div>
<div class="a" style="left:630px;top:167.2px;width:37px;height:16.3px;background:#535353;"></div>
<div class="t" style="left:635px;top:171.3px;font-size:7.6px;color:#e8e8e8;font-weight:700;transform:scaleX(0.77);">Swatches</div>
<div class="a" style="left:772.8px;top:173px;width:6.3px;height:5px;background:#8a8a8a;"></div>
<div class="a" style="left:772.8px;top:174.5px;width:6.3px;height:0.6px;background:#767676;"></div>
<div class="a" style="left:772.8px;top:176.1px;width:6.3px;height:0.6px;background:#767676;"></div>
<div class="a" style="left:639.2px;top:193.7px;width:12.3px;height:11.9px;background:#ffffff;"></div>
<div class="a" style="left:643.2px;top:197.5px;width:4.6px;height:4.4px;background:#474747;"></div>
<div class="a" style="left:633px;top:187.2px;width:12.7px;height:12.3px;background:#535353;border:1.2px solid #404040;border-radius:1.5px"></div>
<div class="t" style="left:636.6px;top:189.5px;font-size:8.6px;color:#c8c8c8;font-weight:400;transform:scaleX(0.9);">?</div>
<div class="a" style="left:750.8px;top:188px;width:13.4px;height:12.8px;background:#383838;"></div>
<div class="a" style="left:765.6px;top:187.6px;width:13.6px;height:13.4px;background:#4a4a4a;"></div>
<div class="a" style="left:633.6px;top:208px;width:145.4px;height:89px;background:#535353;border-left:.8px solid #474747;border-top:.8px solid #474747"></div>
<div class="a" style="left:634px;top:212px;width:138px;height:0.8px;background:#4b4b4b;"></div>
<div class="a" style="left:634px;top:224.2px;width:138px;height:0.8px;background:#4b4b4b;"></div>
<div class="a" style="left:634px;top:236.4px;width:138px;height:0.8px;background:#4b4b4b;"></div>
<div class="a" style="left:634px;top:248.6px;width:138px;height:0.8px;background:#4b4b4b;"></div>
<div class="a" style="left:634px;top:260.8px;width:138px;height:0.8px;background:#4b4b4b;"></div>
<div class="a" style="left:634px;top:273px;width:138px;height:0.8px;background:#4b4b4b;"></div>
<div class="a" style="left:634px;top:285.2px;width:138px;height:0.8px;background:#4b4b4b;"></div>
<div class="a" style="left:647.8px;top:213.89999999999998px;width:9px;height:8.6px;background:linear-gradient(90deg,#f6f6f6,#4a4a4a);box-shadow:0 0 0 .5px #4a4a4a"></div>
<div class="t" style="left:660px;top:214.79999999999998px;font-size:7px;color:#e0e0e0;font-weight:400;transform:scaleX(0.87);">White, Black</div>
<div class="a" style="left:647.8px;top:226.11999999999998px;width:9px;height:8.6px;background:linear-gradient(90deg,#ffe100,#f7781e);box-shadow:0 0 0 .5px #4a4a4a"></div>
<div class="t" style="left:660px;top:227.01999999999998px;font-size:7px;color:#e0e0e0;font-weight:400;transform:scaleX(0.87);">Orange, Yellow</div>
<div class="a" style="left:647.8px;top:238.33999999999997px;width:9px;height:8.6px;background:linear-gradient(90deg,#3d85d6,#b4dcf7);box-shadow:0 0 0 .5px #4a4a4a"></div>
<div class="t" style="left:660px;top:239.23999999999998px;font-size:7px;color:#e0e0e0;font-weight:400;transform:scaleX(0.87);">Fading Sky</div>
<div class="a" style="left:647.8px;top:250.55999999999997px;width:9px;height:8.6px;background:radial-gradient(circle,#ffffff 0,#ffffff 2.6px,#101010 4px);box-shadow:0 0 0 .5px #4a4a4a"></div>
<div class="t" style="left:660px;top:251.45999999999998px;font-size:7px;color:#e0e0e0;font-weight:400;transform:scaleX(0.87);">Super Soft Black Vig...</div>
<div class="a" style="left:647.8px;top:262.78px;width:9px;height:8.6px;background:radial-gradient(circle,#3aa53a 0,#3aa53a 1.5px,#c8e070 2.5px,#50b848 3.5px,#dff0d0 5.5px);box-shadow:0 0 0 .5px #4a4a4a"></div>
<div class="t" style="left:660px;top:263.68px;font-size:7px;color:#e0e0e0;font-weight:400;transform:scaleX(0.87);">Foliage</div>
<div class="a" style="left:647.8px;top:275.0px;width:9px;height:8.6px;background:repeating-linear-gradient(45deg,#b07a52 0,#b07a52 1px,#e0c4a8 1px,#e0c4a8 1.8px,#8a5a3a 1.8px,#8a5a3a 2.6px);box-shadow:0 0 0 .5px #4a4a4a"></div>
<div class="t" style="left:660px;top:275.90000000000003px;font-size:7px;color:#e0e0e0;font-weight:400;transform:scaleX(0.87);">Pompadour</div>
<div class="a" style="left:647.8px;top:287.21999999999997px;width:9px;height:8.6px;background:linear-gradient(90deg,#9a9a9a,#e8e8e8 30%,#0e0e0e 95%);box-shadow:0 0 0 .5px #4a4a4a"></div>
<div class="t" style="left:660px;top:288.12px;font-size:7px;color:#e0e0e0;font-weight:400;transform:scaleX(0.87);">White, Black 2</div>
<div class="a" style="left:772px;top:212px;width:7px;height:85px;background:#505050;"></div>
<div class="a" style="left:773px;top:256px;width:5.5px;height:15px;background:#666666;border-radius:3px"></div>
<div class="a" style="left:633.6px;top:296.5px;width:145.4px;height:0.8px;background:#474747;"></div>
<div class="a" style="left:630px;top:308.7px;width:152px;height:2px;background:#3a3a3a;"></div>
<div class="a" style="left:630px;top:310.7px;width:152px;height:16.2px;background:#434343;"></div>
<div class="a" style="left:665.3px;top:310.9px;width:39px;height:16px;background:#535353;"></div>
<div class="t" style="left:635.5px;top:315px;font-size:7.4px;color:#c8c8c8;font-weight:400;transform:scaleX(0.87);">Gradient</div>
<div class="t" style="left:671px;top:314.8px;font-size:7.4px;color:#e8e8e8;font-weight:700;transform:scaleX(0.76);">Basic RGB</div>
<div class="a" style="left:772.9px;top:316px;width:6.3px;height:5px;background:#8a8a8a;"></div>
<div class="a" style="left:772.9px;top:317.5px;width:6.3px;height:0.6px;background:#767676;"></div>
<div class="a" style="left:772.9px;top:319.1px;width:6.3px;height:0.6px;background:#767676;"></div>
<div class="a" style="left:634px;top:331.5px;width:144px;height:11px;background:#484848;border-radius:1px"></div>
<div class="a" style="left:633.8px;top:344.2px;width:144.6px;height:63px;background:#535353;border:.8px solid #494949"></div>
<div class="a" style="left:633.7px;top:346.9px;width:7.7px;height:7.8px;background:#ffffff;"></div>
<div class="a" style="left:642.2700000000001px;top:346.9px;width:7.7px;height:7.8px;background:#050708;"></div>
<div class="a" style="left:650.84px;top:346.9px;width:7.7px;height:7.8px;background:#ed1c24;"></div>
<div class="a" style="left:659.4100000000001px;top:346.9px;width:7.7px;height:7.8px;background:#f4e918;"></div>
<div class="a" style="left:667.98px;top:346.9px;width:7.7px;height:7.8px;background:#6bbe45;"></div>
<div class="a" style="left:676.5500000000001px;top:346.9px;width:7.7px;height:7.8px;background:#6ecede;"></div>
<div class="a" style="left:685.12px;top:346.9px;width:7.7px;height:7.8px;background:#3b55a5;"></div>
<div class="a" style="left:693.69px;top:346.9px;width:7.7px;height:7.8px;background:#be52a5;"></div>
<div class="a" style="left:702.26px;top:346.9px;width:7.7px;height:7.8px;background:#c9262c;"></div>
<div class="a" style="left:710.83px;top:346.9px;width:7.7px;height:7.8px;background:#ed1c24;"></div>
<div class="a" style="left:719.4000000000001px;top:346.9px;width:7.7px;height:7.8px;background:#f15a29;"></div>
<div class="a" style="left:727.97px;top:346.9px;width:7.7px;height:7.8px;background:#f7941d;"></div>
<div class="a" style="left:736.5400000000001px;top:346.9px;width:7.7px;height:7.8px;background:#fbb040;"></div>
<div class="a" style="left:745.11px;top:346.9px;width:7.7px;height:7.8px;background:#f6eb16;"></div>
<div class="a" style="left:753.6800000000001px;top:346.9px;width:7.7px;height:7.8px;background:#d7df23;"></div>
<div class="a" style="left:762.25px;top:346.9px;width:7.7px;height:7.8px;background:#8dc63f;"></div>
<div class="a" style="left:633.7px;top:355.59999999999997px;width:7.7px;height:7.8px;background:#38b449;"></div>
<div class="a" style="left:642.2700000000001px;top:355.59999999999997px;width:7.7px;height:7.8px;background:#0a9a4a;"></div>
<div class="a" style="left:650.84px;top:355.59999999999997px;width:7.7px;height:7.8px;background:#07703a;"></div>
<div class="a" style="left:659.4100000000001px;top:355.59999999999997px;width:7.7px;height:7.8px;background:#22b573;border:.8px solid #8a8a8a"></div>
<div class="a" style="left:667.98px;top:355.59999999999997px;width:7.7px;height:7.8px;background:#12a89d;"></div>
<div class="a" style="left:676.5500000000001px;top:355.59999999999997px;width:7.7px;height:7.8px;background:#2aace2;"></div>
<div class="a" style="left:685.12px;top:355.59999999999997px;width:7.7px;height:7.8px;background:#0a72ba;"></div>
<div class="a" style="left:693.69px;top:355.59999999999997px;width:7.7px;height:7.8px;background:#2e3a97;"></div>
<div class="a" style="left:702.26px;top:355.59999999999997px;width:7.7px;height:7.8px;background:#262262;"></div>
<div class="a" style="left:710.83px;top:355.59999999999997px;width:7.7px;height:7.8px;background:#662d91;"></div>
<div class="a" style="left:719.4000000000001px;top:355.59999999999997px;width:7.7px;height:7.8px;background:#92278f;"></div>
<div class="a" style="left:727.97px;top:355.59999999999997px;width:7.7px;height:7.8px;background:#9e1f63;"></div>
<div class="a" style="left:736.5400000000001px;top:355.59999999999997px;width:7.7px;height:7.8px;background:#da1c5c;"></div>
<div class="a" style="left:745.11px;top:355.59999999999997px;width:7.7px;height:7.8px;background:#ec008c;"></div>
<div class="a" style="left:753.6800000000001px;top:355.59999999999997px;width:7.7px;height:7.8px;background:#c7b299;"></div>
<div class="a" style="left:762.25px;top:355.59999999999997px;width:7.7px;height:7.8px;background:#998675;"></div>
<div class="a" style="left:633.7px;top:364.29999999999995px;width:7.7px;height:7.8px;background:#7a6353;"></div>
<div class="a" style="left:642.2700000000001px;top:364.29999999999995px;width:7.7px;height:7.8px;background:#5a4a3e;"></div>
<div class="a" style="left:650.84px;top:364.29999999999995px;width:7.7px;height:7.8px;background:#c9996a;"></div>
<div class="a" style="left:659.4100000000001px;top:364.29999999999995px;width:7.7px;height:7.8px;background:#b07f4e;"></div>
<div class="a" style="left:667.98px;top:364.29999999999995px;width:7.7px;height:7.8px;background:#916235;"></div>
<div class="a" style="left:676.5500000000001px;top:364.29999999999995px;width:7.7px;height:7.8px;background:#7b4d23;"></div>
<div class="a" style="left:685.12px;top:364.29999999999995px;width:7.7px;height:7.8px;background:#6a3f16;"></div>
<div class="a" style="left:693.69px;top:364.29999999999995px;width:7.7px;height:7.8px;background:#472612;"></div>
<div class="a" style="left:702.26px;top:364.29999999999995px;width:7.7px;height:7.8px;background:linear-gradient(90deg,#ffffff,#101010);"></div>
<div class="a" style="left:710.83px;top:364.29999999999995px;width:7.7px;height:7.8px;background:linear-gradient(90deg,#f7941d,#ff5a00 40%,#ffe600);"></div>
<div class="a" style="left:719.4000000000001px;top:364.29999999999995px;width:7.7px;height:7.8px;background:linear-gradient(90deg,#5fd8f0,#e0f8ff);"></div>
<div class="a" style="left:727.97px;top:364.29999999999995px;width:7.7px;height:7.8px;background:repeating-linear-gradient(45deg,#2a5aa0 0,#2a5aa0 1.2px,#c0d8f0 1.2px,#c0d8f0 2.2px);"></div>
<div class="a" style="left:642.3px;top:373.9px;width:7.6px;height:7.8px;background:#5bc8d6;"></div>
<div class="a" style="left:650.87px;top:373.9px;width:7.6px;height:7.8px;background:#8a8fd4;"></div>
<div class="a" style="left:659.4399999999999px;top:373.9px;width:7.6px;height:7.8px;background:#c4a0d8;"></div>
<div class="a" style="left:642.3px;top:383.7px;width:7.5px;height:7.6px;background:#000000;"></div>
<div class="a" style="left:650.87px;top:383.7px;width:7.5px;height:7.6px;background:#1c1c1c;"></div>
<div class="a" style="left:659.4399999999999px;top:383.7px;width:7.5px;height:7.6px;background:#333333;"></div>
<div class="a" style="left:668.01px;top:383.7px;width:7.5px;height:7.6px;background:#4d4d4d;"></div>
<div class="a" style="left:676.5799999999999px;top:383.7px;width:7.5px;height:7.6px;background:#666666;"></div>
<div class="a" style="left:685.15px;top:383.7px;width:7.5px;height:7.6px;background:#808080;"></div>
<div class="a" style="left:693.7199999999999px;top:383.7px;width:7.5px;height:7.6px;background:#999999;"></div>
<div class="a" style="left:702.29px;top:383.7px;width:7.5px;height:7.6px;background:#b3b3b3;"></div>
<div class="a" style="left:710.8599999999999px;top:383.7px;width:7.5px;height:7.6px;background:#cccccc;"></div>
<div class="a" style="left:719.43px;top:383.7px;width:7.5px;height:7.6px;background:#e6e6e6;"></div>
<div class="a" style="left:728.0px;top:383.7px;width:7.5px;height:7.6px;background:#f6f6f6;"></div>
<div class="a" style="left:630px;top:419px;width:152px;height:2px;background:#3a3a3a;"></div>
<div class="a" style="left:630px;top:421px;width:152px;height:18px;background:#434343;"></div>
<div class="a" style="left:630px;top:421px;width:28.1px;height:18px;background:#535353;"></div>
<div class="a" style="left:697px;top:421.5px;width:0.8px;height:17.5px;background:#3b3b3b;"></div>
<div class="t" style="left:635.3px;top:426.4px;font-size:7.4px;color:#e8e8e8;font-weight:700;transform:scaleX(0.77);">Layers</div>
<div class="t" style="left:663.2px;top:426.4px;font-size:7.4px;color:#c8c8c8;font-weight:400;transform:scaleX(0.91);">Artboards</div>
<div class="a" style="left:772.9px;top:427.7px;width:6.3px;height:5px;background:#8a8a8a;"></div>
<div class="a" style="left:772.9px;top:429.2px;width:6.3px;height:0.6px;background:#767676;"></div>
<div class="a" style="left:772.9px;top:430.8px;width:6.3px;height:0.6px;background:#767676;"></div>
<svg class="a" style="left:0;top:0" width="782" height="439" viewBox="0 0 782 439"><path d="M775 40.8 L777 42.5 L775 44.2 M777.5 40.8 L779.5 42.5 L777.5 44.2" fill="none" stroke="#bdbdbd" stroke-width=".9"/>
<path d="M708.5 53.5 L710 51.8 L711.5 53.5 M708.5 55.2 L710 56.9 L711.5 55.2" fill="none" stroke="#c8c8c8" stroke-width=".8"/>
<rect x="636.1" y="80" width="1" height="11" fill="#d9d9d9"/>
<rect x="637.7" y="81.3" width="5" height="3.5" fill="#d9d9d9"/>
<rect x="637.7" y="86.6" width="8" height="3" fill="#d9d9d9"/>
<rect x="662.6" y="80" width="0.8" height="11" fill="#a8a8a8"/>
<rect x="660.2" y="81.3" width="5.4" height="3.5" fill="#d9d9d9"/>
<rect x="659" y="86.6" width="8" height="3" fill="#d9d9d9"/>
<rect x="689.8" y="80" width="1" height="11" fill="#d9d9d9"/>
<rect x="684" y="81.3" width="5.5" height="3.5" fill="#d9d9d9"/>
<rect x="681.5" y="86.6" width="8" height="3" fill="#d9d9d9"/>
<rect x="722.5" y="80" width="10" height="0.9" fill="#d9d9d9"/>
<rect x="724.2" y="81.5" width="3" height="8.6" fill="#d9d9d9"/>
<rect x="729" y="81.5" width="3" height="5" fill="#d9d9d9"/>
<rect x="744.5" y="85.5" width="12" height="0.8" fill="#a8a8a8"/>
<rect x="746.5" y="81.3" width="3" height="9" fill="#d9d9d9"/>
<rect x="751.5" y="82.8" width="3" height="6" fill="#d9d9d9"/>
<rect x="767" y="90.6" width="11" height="0.9" fill="#d9d9d9"/>
<rect x="768.2" y="80.8" width="3" height="9.2" fill="#d9d9d9"/>
<rect x="773" y="84.2" width="3" height="5.8" fill="#d9d9d9"/>
<rect x="636" y="114.5" width="10" height="0.8" fill="#d9d9d9"/>
<rect x="639" y="116" width="4" height="3" fill="#d9d9d9"/>
<rect x="636" y="120.5" width="10" height="0.8" fill="#d9d9d9"/>
<rect x="637.5" y="121.5" width="7" height="3.3" fill="#d9d9d9"/>
<rect x="659" y="117.2" width="11" height="0.7" fill="#a8a8a8"/>
<rect x="660.5" y="115.6" width="7.5" height="3.2" fill="#d9d9d9"/>
<rect x="659" y="122.5" width="11" height="0.7" fill="#a8a8a8"/>
<rect x="660.5" y="120.8" width="8" height="3.4" fill="#d9d9d9"/>
<rect x="683.5" y="114.6" width="4" height="3" fill="#d9d9d9"/>
<rect x="680.5" y="118.2" width="11" height="0.8" fill="#d9d9d9"/>
<rect x="682" y="119.6" width="8" height="3.4" fill="#d9d9d9"/>
<rect x="680.5" y="123.8" width="11" height="0.8" fill="#d9d9d9"/>
<rect x="723" y="114" width="0.8" height="11" fill="#d9d9d9"/>
<rect x="724.3" y="115.8" width="2.7" height="7.6" fill="#d9d9d9"/>
<rect x="729" y="114" width="0.8" height="11" fill="#d9d9d9"/>
<rect x="730" y="117" width="3" height="5" fill="#d9d9d9"/>
<rect x="747" y="114.5" width="0.6" height="10.5" fill="#a8a8a8"/>
<rect x="745.6" y="115.6" width="2.8" height="8" fill="#d9d9d9"/>
<rect x="752.5" y="114.5" width="0.6" height="10.5" fill="#a8a8a8"/>
<rect x="751.1" y="116.8" width="2.8" height="5.8" fill="#d9d9d9"/>
<rect x="767.3" y="115.8" width="2.7" height="7.6" fill="#d9d9d9"/>
<rect x="771" y="114" width="0.8" height="11" fill="#d9d9d9"/>
<rect x="773" y="117" width="2.6" height="5" fill="#d9d9d9"/>
<rect x="777" y="114" width="0.8" height="11" fill="#d9d9d9"/>
<rect x="640.2" y="150" width="6" height="3.6" fill="#d9d9d9"/>
<rect x="639.5" y="154.8" width="7" height="3.6" fill="#d9d9d9"/>
<rect x="636.5" y="152.8" width="2" height="0.8" fill="#d9d9d9"/>
<rect x="637" y="151" width="0.7" height="4.5" fill="#b0b0b0"/>
<rect x="655.6" y="151" width="3.4" height="8" fill="#d9d9d9"/>
<rect x="660" y="152.3" width="4.6" height="5.5" fill="#d9d9d9"/>
<rect x="657" y="149.2" width="5" height="0.7" fill="#b0b0b0"/>
<path d="M674.0 152.2 L676 150.2 L678.0 152.2" fill="none" stroke="#707070" stroke-width="0.9"/>
<path d="M674.0 155.2 L676 157.2 L678.0 155.2" fill="none" stroke="#707070" stroke-width="0.9"/>
<path d="M761.5 150.5 V158.8 H769.5 V153.5 L767 151.2 H762.5" fill="none" stroke="#d0d0d0" stroke-width=".9"/><path d="M760 150.8 H763.5 M761.8 149 V151" stroke="#d0d0d0" stroke-width=".8"/>
<path d="M772.85 154.125 L774.6 155.875 L776.35 154.125" fill="none" stroke="#cdcdcd" stroke-width="0.9"/>
<path d="M639.6 205.4 L651.4 193.7" stroke="#ee1c24" stroke-width="1.1"/>
<rect x="753.5" y="190.2" width="8" height="1.5" fill="#d4d4d4"/>
<rect x="753.5" y="193.4" width="8" height="1.5" fill="#d4d4d4"/>
<rect x="753.5" y="196.6" width="8" height="1.5" fill="#d4d4d4"/>
<g fill="#d8d8d8"><rect x="768.2" y="190.2" width="2.3" height="2.3"/><rect x="768.2" y="193.1" width="2.3" height="2.3"/><rect x="768.2" y="196.0" width="2.3" height="2.3"/><rect x="771.1" y="190.2" width="2.3" height="2.3"/><rect x="771.1" y="193.1" width="2.3" height="2.3"/><rect x="771.1" y="196.0" width="2.3" height="2.3"/><rect x="774.0" y="190.2" width="2.3" height="2.3"/><rect x="774.0" y="193.1" width="2.3" height="2.3"/><rect x="774.0" y="196.0" width="2.3" height="2.3"/></g>
<rect x="648" y="209.2" width="9" height="1.2" fill="#5a3c2a"/>
<rect x="762.2" y="209.2" width="6.8" height="0.9" fill="#8a8a8a"/>
<path d="M773.5 214.8 L775.5 212.8 L777.5 214.8" fill="none" stroke="#a0a0a0" stroke-width="0.9"/>
<path d="M773.5 292.0 L775.5 294.0 L777.5 292.0" fill="none" stroke="#a0a0a0" stroke-width="0.9"/>
<path d="M637.3 306 V300.3 M639.3 306 V300.3 M641.2 306 V302 C641.2 300.2 644.2 300.2 644.2 302.5 V306" fill="none" stroke="#cfcfcf" stroke-width="1.1"/><rect x="645.3" y="305.6" width="1" height="1" fill="#cfcfcf"/>
<path d="M659.8 300 L655.8 303 L659.8 306" fill="none" stroke="#cfcfcf" stroke-width="1"/><circle cx="655.8" cy="303" r="1.3" fill="#cfcfcf"/><circle cx="659.8" cy="300.3" r=".9" fill="#cfcfcf"/><circle cx="659.8" cy="305.8" r=".9" fill="#cfcfcf"/>
<path d="M668 306 H679 A2.5 2.5 0 0 0 677 301.5 A3.5 3.5 0 0 0 670.5 302.5 A2 2 0 0 0 668 306Z" fill="#6a6a6a"/>
<rect x="695.5" y="299" width="8.5" height="7" fill="#cfcfcf"/>
<rect x="697" y="300.5" width="3" height="2.5" fill="#777"/>
<rect x="704.5" y="305.5" width="1" height="1" fill="#cfcfcf"/>
<rect x="712" y="299.5" width="7.5" height="6.5" fill="none" stroke="#6e6e6e" stroke-width="1"/>
<path d="M726.8 299.5 H730.3 L731.2 300.5 H735.5 V306 H726.8Z" fill="#d4d4d4"/>
<path d="M744 300 H750 V306 H744Z" fill="#6e6e6e"/>
<path d="M759 300 H766 M760 301 V306 H765 V301" fill="none" stroke="#6e6e6e" stroke-width="1.2"/>
<circle cx="642" cy="336" r="2.4" fill="none" stroke="#d8d8d8" stroke-width="1"/><path d="M640.3 337.7 L637.5 340.5" stroke="#d8d8d8" stroke-width="1.2"/>
<path d="M633.8 375.4 H636.8 L637.5999999999999 376.2 H641.8 V381.7 H633.8Z" fill="#d6d6d6"/><rect x="633.8" y="377.2" width="8" height=".6" fill="#9a9a9a"/>
<path d="M633.8 385.0 H636.8 L637.5999999999999 385.8 H641.8 V391.3 H633.8Z" fill="#d6d6d6"/><rect x="633.8" y="386.8" width="8" height=".6" fill="#9a9a9a"/>
<path d="M637 418 V412.3 M639 418 V412.3 M640.9 418 V414 C640.9 412.2 643.9 412.2 643.9 414.5 V418" fill="none" stroke="#cfcfcf" stroke-width="1.1"/><rect x="645" y="417.6" width="1" height="1" fill="#cfcfcf"/>
<path d="M660.8 410.3 L656.6 414.2 L660.8 418.1Z M669.4 410.3 L673.6 414.2 L669.4 418.1Z" fill="#d4d4d4"/>
<path d="M755 411 L761 417.5 M761 411 L755 417.5" stroke="#d8d8d8" stroke-width="1.3"/><path d="M758.2 413.5 L761.2 410.5" stroke="#d8d8d8" stroke-width="2"/></svg>
<div class="a" style="left:457.6px;top:59px;width:143px;height:89.6px;background:#444444;border-radius:3.5px 3.5px 1px 1px"></div>
<div class="a" style="left:458.4px;top:59.5px;width:141.5px;height:88.2px;background:#535353;border-radius:3px 3px 0 0"></div>
<div class="a" style="left:458.2px;top:59.5px;width:141.8px;height:8px;background:#3d3d3d;border-radius:3px 3px 0 0"></div>
<div class="a" style="left:458.2px;top:67.5px;width:141.8px;height:16.3px;background:#434343;"></div>
<div class="a" style="left:458.2px;top:67.5px;width:53px;height:16.3px;background:#535353;"></div>
<div class="t" style="left:468px;top:71.6px;font-size:7.6px;color:#ececec;font-weight:700;transform:scaleX(0.8);">Transparency</div>
<div class="a" style="left:589.8px;top:74.5px;width:6.3px;height:5px;background:#8a8a8a;"></div>
<div class="a" style="left:589.8px;top:76.0px;width:6.3px;height:0.6px;background:#767676;"></div>
<div class="a" style="left:589.8px;top:77.6px;width:6.3px;height:0.6px;background:#767676;"></div>
<div class="a" style="left:463px;top:88px;width:55px;height:11.8px;background:#474747;"></div>
<div class="t" style="left:466px;top:90.4px;font-size:7.6px;color:#dedede;font-weight:400;transform:scaleX(0.8);">Color Burn</div>
<div class="t" style="left:522px;top:90.4px;font-size:7.6px;color:#c8c8c8;font-weight:400;transform:scaleX(0.8);">Opacity:</div>
<div class="a" style="left:547px;top:88px;width:31.3px;height:11.8px;background:#474747;"></div>
<div class="t" style="left:549px;top:90.4px;font-size:7.6px;color:#dedede;font-weight:400;transform:scaleX(0.8);">100%</div>
<div class="a" style="left:579px;top:88px;width:10.5px;height:11.8px;background:#4d4d4d;"></div>
<div class="a" style="left:461px;top:104px;width:136px;height:0.8px;background:#4a4a4a;"></div>
<div class="a" style="left:463.6px;top:110.5px;width:82px;height:33px;background:#505050;"></div>
<div class="a" style="left:463.6px;top:110.5px;width:31.4px;height:31.6px;background:#ffffff;border:1px solid #222"></div>
<div class="a" style="left:547.5px;top:108px;width:47px;height:11.8px;background:#535353;border:.9px solid #6a6a6a;border-radius:1px"></div>
<div class="t" style="left:555.6px;top:110.6px;font-size:7.6px;color:#e8e8e8;font-weight:400;transform:scaleX(0.76);">Make Mask</div>
<div class="a" style="left:548px;top:124.2px;width:7.2px;height:7.2px;background:none;border:.9px solid #5e5e5e"></div>
<div class="t" style="left:558px;top:125.2px;font-size:7.4px;color:#6a6a6a;font-weight:400;transform:scaleX(0.8);">Clip</div>
<div class="a" style="left:548px;top:136.5px;width:7.2px;height:7.2px;background:none;border:.9px solid #5e5e5e"></div>
<div class="t" style="left:558px;top:137.4px;font-size:7.4px;color:#6a6a6a;font-weight:400;transform:scaleX(0.8);">Invert Mask</div>
<svg class="a" style="left:0;top:0" width="782" height="439" viewBox="0 0 782 439"><path d="M584 61.8 L582 63.5 L584 65.2 M586.5 61.8 L584.5 63.5 L586.5 65.2" fill="none" stroke="#bdbdbd" stroke-width=".9"/>
<path d="M592.3 61.3 L596.5 65.5 M596.5 61.3 L592.3 65.5" stroke="#d0d0d0" stroke-width="1"/>
<path d="M462 74 L463.5 72.3 L465 74 M462 76 L463.5 77.7 L465 76" fill="none" stroke="#c8c8c8" stroke-width=".8"/>
<path d="M510.3 92.64999999999999 L512.6 94.95 L514.9 92.64999999999999" fill="none" stroke="#cdcdcd" stroke-width="1.1"/>
<path d="M582.4 91.39999999999999 L584.8000000000001 93.8 L582.4 96.2" fill="none" stroke="#cdcdcd" stroke-width="1.1"/>
<circle cx="473.6" cy="126.5" r="8.2" fill="#f3e817"/><circle cx="485.2" cy="126.5" r="8.8" fill="#27b26e"/></svg>
</body></html>
